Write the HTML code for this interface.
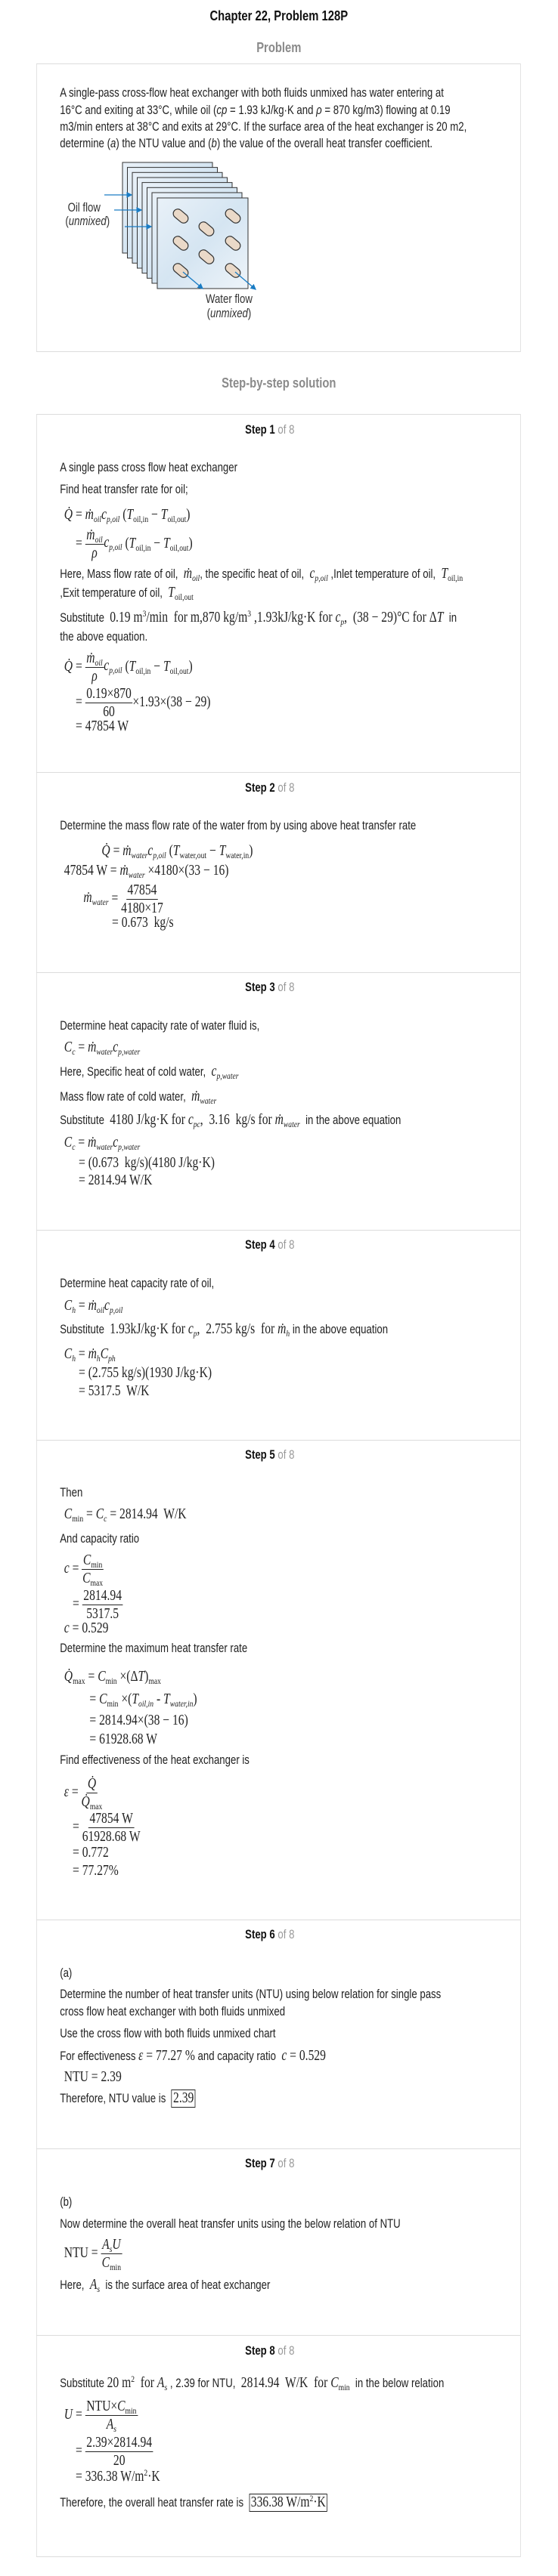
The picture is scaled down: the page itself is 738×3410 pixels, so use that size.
<!DOCTYPE html>
<html><head><meta charset="utf-8">
<style>
html,body{margin:0;padding:0;background:#fff;}
body{width:738px;height:3410px;position:relative;overflow:hidden;font-family:"Liberation Sans",Arial,sans-serif;color:#222;}
#w{position:absolute;left:0;top:0;width:922.5px;height:3410px;transform:scaleX(0.8);transform-origin:0 0;}
.ctr{position:absolute;left:0;width:922px;text-align:center;font-weight:bold;}
.box{position:absolute;border:1px solid #dcdcdc;}
.sep{position:absolute;left:60px;width:800px;height:0;border-top:1px solid #dcdcdc;}
.l{position:absolute;left:99px;height:24px;display:flex;align-items:center;white-space:pre;font-size:16.5px;}
.fh{height:50px;}
.m{font-family:"Liberation Serif","Times New Roman",serif;font-size:19.5px;white-space:pre;}
.m i{font-style:italic;}
sub{font-size:12px;vertical-align:-4px;line-height:0;}
sup{font-size:12px;vertical-align:7px;line-height:0;}
.fr{display:inline-flex;flex-direction:column;align-items:center;vertical-align:middle;}
.fr .n{border-bottom:1px solid #222;padding:0 2px;line-height:23px;}
.fr .d{line-height:23px;}
.st{position:absolute;left:0;width:892px;text-align:center;font-weight:bold;font-size:16.5px;color:#111;}
.st span{font-weight:normal;color:#999;}
.bx{border:1px solid #222;padding:0 2px;}
</style></head><body>
<div id="w">
<div class="ctr" style="top:10px;font-size:18.5px;color:#111;">Chapter 22, Problem 128P</div>
<div class="ctr" style="top:52px;font-size:18.5px;color:#8a8a8a;">Problem</div>
<div class="box" style="left:60px;top:84px;width:799px;height:380px;"></div>
<div class="l" style="top:111px">A single-pass cross-flow heat exchanger with both fluids unmixed has water entering at</div>
<div class="l" style="top:134px">16°C and exiting at 33°C, while oil (<i>cp</i> = 1.93 kJ/kg·K and <i>ρ</i> = 870 kg/m3) flowing at 0.19</div>
<div class="l" style="top:156px">m3/min enters at 38°C and exits at 29°C. If the surface area of the heat exchanger is 20 m2,</div>
<div class="l" style="top:178px">determine (<i>a</i>) the NTU value and (<i>b</i>) the value of the overall heat transfer coefficient.</div>
<div class="l" style="top:263px;left:112px;color:#333">Oil flow</div>
<div class="l" style="top:281px;left:108px;color:#333">(<i>unmixed</i>)</div>
<div class="l" style="top:384px;left:340px;color:#333">Water flow</div>
<div class="l" style="top:403px;left:342px;color:#333">(<i>unmixed</i>)</div>

<div class="ctr" style="top:496px;font-size:18.5px;color:#8a8a8a;">Step-by-step solution</div>
<div class="box" style="left:60px;top:548px;width:799px;height:2835px;"></div>
<div class="sep" style="top:1022px"></div>
<div class="sep" style="top:1287px"></div>
<div class="sep" style="top:1628px"></div>
<div class="sep" style="top:1906px"></div>
<div class="sep" style="top:2541px"></div>
<div class="sep" style="top:2844px"></div>
<div class="sep" style="top:3091px"></div>

<!-- Step 1 -->
<div class="st" style="top:560px">Step 1 <span>of 8</span></div>
<div class="l" style="top:607px">A single pass cross flow heat exchanger</div>
<div class="l" style="top:636px">Find heat transfer rate for oil;</div>
<div class="l" style="top:670px;left:106px"><span class="m"><i>Q̇</i> = <i>ṁ<sub>oil</sub>c<sub>p,oil</sub></i> (<i>T</i><sub>oil,in</sub> − <i>T</i><sub>oil,out</sub>)</span></div>
<div class="l fh" style="top:695px;left:125px"><span class="m">= <span class="fr"><span class="n"><i>ṁ<sub>oil</sub></i></span><span class="d"><i>ρ</i></span></span><i>c<sub>p,oil</sub></i> (<i>T</i><sub>oil,in</sub> − <i>T</i><sub>oil,out</sub>)</span></div>
<div class="l" style="top:748px">Here, Mass flow rate of oil,  <span class="m"><i>ṁ<sub>oil</sub></i></span>, the specific heat of oil,  <span class="m"><i>c<sub>p,oil</sub></i></span> ,Inlet temperature of oil,  <span class="m"><i>T</i><sub>oil,in</sub></span></div>
<div class="l" style="top:773px">,Exit temperature of oil,  <span class="m"><i>T</i><sub>oil,out</sub></span></div>
<div class="l" style="top:806px">Substitute  <span class="m">0.19 m<sup>3</sup>/min  for m,870 kg/m<sup>3</sup> ,1.93kJ/kg·K for <i>c<sub>p</sub></i>,  (38 − 29)°C for Δ<i>T</i></span>  in</div>
<div class="l" style="top:831px">the above equation.</div>
<div class="l fh" style="top:858px;left:106px"><span class="m"><i>Q̇</i> = <span class="fr"><span class="n"><i>ṁ<sub>oil</sub></i></span><span class="d"><i>ρ</i></span></span><i>c<sub>p,oil</sub></i> (<i>T</i><sub>oil,in</sub> − <i>T</i><sub>oil,out</sub>)</span></div>
<div class="l fh" style="top:905px;left:125px"><span class="m">= <span class="fr"><span class="n">0.19×870</span><span class="d">60</span></span>×1.93×(38 − 29)</span></div>
<div class="l" style="top:950px;left:125px"><span class="m">= 47854 W</span></div>

<!-- Step 2 -->
<div class="st" style="top:1034px">Step 2 <span>of 8</span></div>
<div class="l" style="top:1081px">Determine the mass flow rate of the water from by using above heat transfer rate</div>
<div class="l" style="top:1115px;left:168px"><span class="m"><i>Q̇</i> = <i>ṁ<sub>water</sub>c<sub>p,oil</sub></i> (<i>T</i><sub>water,out</sub> − <i>T</i><sub>water,in</sub>)</span></div>
<div class="l" style="top:1141px;left:106px"><span class="m">47854 W = <i>ṁ<sub>water</sub></i> ×4180×(33 − 16)</span></div>
<div class="l fh" style="top:1165px;left:138px"><span class="m"><i>ṁ<sub>water</sub></i> = <span class="fr"><span class="n">47854</span><span class="d">4180×17</span></span></span></div>
<div class="l" style="top:1210px;left:185px"><span class="m">= 0.673  kg/s</span></div>

<!-- Step 3 -->
<div class="st" style="top:1298px">Step 3 <span>of 8</span></div>
<div class="l" style="top:1346px">Determine heat capacity rate of water fluid is,</div>
<div class="l" style="top:1375px;left:106px"><span class="m"><i>C<sub>c</sub></i> = <i>ṁ<sub>water</sub>c<sub>p,water</sub></i></span></div>
<div class="l" style="top:1407px">Here, Specific heat of cold water,  <span class="m"><i>c<sub>p,water</sub></i></span></div>
<div class="l" style="top:1440px">Mass flow rate of cold water,  <span class="m"><i>ṁ<sub>water</sub></i></span></div>
<div class="l" style="top:1471px">Substitute  <span class="m">4180 J/kg·K for <i>c<sub>pc</sub></i>,  3.16  kg/s for <i>ṁ<sub>water</sub></i></span>  in the above equation</div>
<div class="l" style="top:1501px;left:106px"><span class="m"><i>C<sub>c</sub></i> = <i>ṁ<sub>water</sub>c<sub>p,water</sub></i></span></div>
<div class="l" style="top:1528px;left:130px"><span class="m">= (0.673  kg/s)(4180 J/kg·K)</span></div>
<div class="l" style="top:1551px;left:130px"><span class="m">= 2814.94 W/K</span></div>

<!-- Step 4 -->
<div class="st" style="top:1639px">Step 4 <span>of 8</span></div>
<div class="l" style="top:1687px">Determine heat capacity rate of oil,</div>
<div class="l" style="top:1717px;left:106px"><span class="m"><i>C<sub>h</sub></i> = <i>ṁ<sub>oil</sub>c<sub>p,oil</sub></i></span></div>
<div class="l" style="top:1748px">Substitute  <span class="m">1.93kJ/kg·K for <i>c<sub>p</sub></i>,  2.755 kg/s  for <i>ṁ<sub>h</sub></i></span> in the above equation</div>
<div class="l" style="top:1781px;left:106px"><span class="m"><i>C<sub>h</sub></i> = <i>ṁ<sub>h</sub>C<sub>ph</sub></i></span></div>
<div class="l" style="top:1806px;left:130px"><span class="m">= (2.755 kg/s)(1930 J/kg·K)</span></div>
<div class="l" style="top:1830px;left:130px"><span class="m">= 5317.5  W/K</span></div>

<!-- Step 5 -->
<div class="st" style="top:1917px">Step 5 <span>of 8</span></div>
<div class="l" style="top:1964px">Then</div>
<div class="l" style="top:1993px;left:106px"><span class="m"><i>C</i><sub>min</sub> = <i>C<sub>c</sub></i> = 2814.94  W/K</span></div>
<div class="l" style="top:2025px">And capacity ratio</div>
<div class="l fh" style="top:2052px;left:106px"><span class="m"><i>c</i> = <span class="fr"><span class="n"><i>C</i><sub>min</sub></span><span class="d"><i>C</i><sub>max</sub></span></span></span></div>
<div class="l fh" style="top:2099px;left:120px"><span class="m">= <span class="fr"><span class="n">2814.94</span><span class="d">5317.5</span></span></span></div>
<div class="l" style="top:2144px;left:106px"><span class="m"><i>c</i> = 0.529</span></div>
<div class="l" style="top:2170px">Determine the maximum heat transfer rate</div>
<div class="l" style="top:2208px;left:106px"><span class="m"><i>Q̇</i><sub>max</sub> = <i>C</i><sub>min</sub> ×(Δ<i>T</i>)<sub>max</sub></span></div>
<div class="l" style="top:2238px;left:148px"><span class="m">= <i>C</i><sub>min</sub> ×(<i>T<sub>oil,in</sub></i> - <i>T<sub>water,in</sub></i>)</span></div>
<div class="l" style="top:2266px;left:148px"><span class="m">= 2814.94×(38 − 16)</span></div>
<div class="l" style="top:2291px;left:148px"><span class="m">= 61928.68 W</span></div>
<div class="l" style="top:2318px">Find effectiveness of the heat exchanger is</div>
<div class="l fh" style="top:2348px;left:106px"><span class="m"><i>ε</i> = <span class="fr"><span class="n"><i>Q̇</i></span><span class="d"><i>Q̇</i><sub>max</sub></span></span></span></div>
<div class="l fh" style="top:2394px;left:120px"><span class="m">= <span class="fr"><span class="n">47854 W</span><span class="d">61928.68 W</span></span></span></div>
<div class="l" style="top:2441px;left:120px"><span class="m">= 0.772</span></div>
<div class="l" style="top:2465px;left:120px"><span class="m">= 77.27%</span></div>

<!-- Step 6 -->
<div class="st" style="top:2552px">Step 6 <span>of 8</span></div>
<div class="l" style="top:2600px">(a)</div>
<div class="l" style="top:2628px">Determine the number of heat transfer units (NTU) using below relation for single pass</div>
<div class="l" style="top:2651px">cross flow heat exchanger with both fluids unmixed</div>
<div class="l" style="top:2680px">Use the cross flow with both fluids unmixed chart</div>
<div class="l" style="top:2710px">For effectiveness <span class="m"><i>ε</i> = 77.27 %</span> and capacity ratio  <span class="m"><i>c</i> = 0.529</span></div>
<div class="l" style="top:2738px;left:106px"><span class="m">NTU = 2.39</span></div>
<div class="l" style="top:2766px">Therefore, NTU value is  <span class="m bx">2.39</span></div>

<!-- Step 7 -->
<div class="st" style="top:2855px">Step 7 <span>of 8</span></div>
<div class="l" style="top:2903px">(b)</div>
<div class="l" style="top:2932px">Now determine the overall heat transfer units using the below relation of NTU</div>
<div class="l fh" style="top:2958px;left:106px"><span class="m">NTU = <span class="fr"><span class="n"><i>A<sub>s</sub>U</i></span><span class="d"><i>C</i><sub>min</sub></span></span></span></div>
<div class="l" style="top:3013px">Here,  <span class="m"><i>A<sub>s</sub></i></span>  is the surface area of heat exchanger</div>

<!-- Step 8 -->
<div class="st" style="top:3103px">Step 8 <span>of 8</span></div>
<div class="l" style="top:3143px">Substitute <span class="m">20 m<sup>2</sup>  for <i>A<sub>s</sub></i></span> , 2.39 for NTU,  <span class="m">2814.94  W/K  for <i>C</i><sub>min</sub></span>  in the below relation</div>
<div class="l fh" style="top:3172px;left:106px"><span class="m"><i>U</i> = <span class="fr"><span class="n">NTU×<i>C</i><sub>min</sub></span><span class="d"><i>A<sub>s</sub></i></span></span></span></div>
<div class="l fh" style="top:3220px;left:125px"><span class="m">= <span class="fr"><span class="n">2.39×2814.94</span><span class="d">20</span></span></span></div>
<div class="l" style="top:3267px;left:125px"><span class="m">= 336.38 W/m<sup>2</sup>·K</span></div>
<div class="l" style="top:3301px">Therefore, the overall heat transfer rate is  <span class="m bx">336.38 W/m<sup>2</sup>·K</span></div>
</div>

<!-- figure (real coords) -->
<svg style="position:absolute;left:0;top:0" width="738" height="460" viewBox="0 0 738 460">
<defs>
<linearGradient id="g" x1="0" y1="0" x2="1" y2="1">
<stop offset="0" stop-color="#e9f1f8"/><stop offset="0.5" stop-color="#d5e5f2"/><stop offset="1" stop-color="#eef4f9"/>
</linearGradient>
<marker id="ar" markerWidth="6" markerHeight="6" refX="5" refY="3" orient="auto"><path d="M0,0 L6,3 L0,6 z" fill="#1a7cc4"/></marker>
</defs>
<g stroke="#333" stroke-width="1" fill="url(#g)">
<rect x="162" y="215" width="119" height="120"/>
<rect x="168.5" y="221.6" width="119" height="120"/>
<rect x="175" y="228.3" width="119" height="120"/>
<rect x="181.5" y="235" width="119" height="120"/>
<rect x="188" y="241.6" width="119" height="120"/>
<rect x="194.5" y="248.3" width="119" height="120"/>
<rect x="201" y="255" width="119" height="120"/>
<rect x="208" y="262" width="120" height="120"/>
</g>
<g stroke="#1a7cc4" stroke-width="1.3" marker-end="url(#ar)">
<line x1="138" y1="258" x2="174" y2="258"/>
<line x1="151" y1="278" x2="187" y2="278"/>
<line x1="165" y1="300" x2="200" y2="300"/>
</g>
<g fill="#ead9c8" stroke="#333" stroke-width="1.2">
<g transform="translate(239,286) rotate(40)"><rect x="-11" y="-6" width="22" height="12" rx="6"/></g>
<g transform="translate(308,286) rotate(40)"><rect x="-11" y="-6" width="22" height="12" rx="6"/></g>
<g transform="translate(273,303) rotate(40)"><rect x="-11" y="-6" width="22" height="12" rx="6"/></g>
<g transform="translate(239,322) rotate(40)"><rect x="-11" y="-6" width="22" height="12" rx="6"/></g>
<g transform="translate(308,322) rotate(40)"><rect x="-11" y="-6" width="22" height="12" rx="6"/></g>
<g transform="translate(273,340) rotate(40)"><rect x="-11" y="-6" width="22" height="12" rx="6"/></g>
<g transform="translate(239,358) rotate(40)"><rect x="-11" y="-6" width="22" height="12" rx="6"/></g>
<g transform="translate(308,358) rotate(40)"><rect x="-11" y="-6" width="22" height="12" rx="6"/></g>
</g>
<g stroke="#1a7cc4" stroke-width="1.3" marker-end="url(#ar)">
<line x1="242" y1="360" x2="268" y2="382"/>
<line x1="311" y1="360" x2="338" y2="383"/>
</g>
</svg>
</body></html>
